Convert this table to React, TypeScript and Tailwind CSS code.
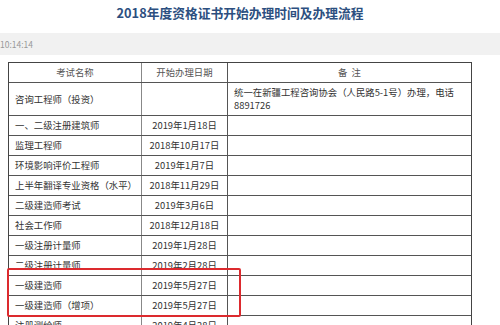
import React from 'react'

const FONT = { fontFamily: '"Noto Sans CJK SC", "Noto Sans", sans-serif' }

const ROWS: [string, string][] = [
  ['一、二级注册建筑师', '2019年1月18日'],
  ['监理工程师', '2018年10月17日'],
  ['环境影响评价工程师', '2019年1月7日'],
  ['上半年翻译专业资格（水平）', '2018年11月29日'],
  ['二级建造师考试', '2019年3月6日'],
  ['社会工作师', '2018年12月18日'],
  ['一级注册计量师', '2019年1月28日'],
  ['二级注册计量师', '2019年2月28日'],
  ['一级建造师', '2019年5月27日'],
  ['一级建造师（增项）', '2019年5月27日'],
  ['注册测绘师', '2019年4月28日'],
]

function Row({ name, date }: { name: string; date: string }) {
  return (
    <div className="flex h-[20px] border-b border-[#555]">
      <div className="w-[133px] shrink-0 border-r border-[#888] pl-[6px] flex items-center">{name}</div>
      <div className="w-[86px] shrink-0 border-r border-[#555] flex items-center justify-center">{date}</div>
      <div className="flex-1" />
    </div>
  )
}

export default function App() {
  return (
    <div className="relative w-[500px] h-[325px] overflow-hidden bg-white" style={FONT}>
      <div className="h-[33px] flex items-start justify-center pt-[4px] pr-[20px]">
        <h1 className="text-[12.75px] font-bold text-[#2c4f80] leading-[18px]">
          2018年度资格证书开始办理时间及办理流程
        </h1>
      </div>
      <div className="h-[22px] bg-[#f1f1f1] flex items-center text-[8.5px] text-[#999]">10:14:14</div>
      <div className="ml-[8px] mt-[7px] w-[464px] border border-[#444] border-b-0 text-[9.4px] text-[#333] leading-[13px]">
        <div className="flex h-[20px] border-b border-[#555] text-[#555]">
          <div className="w-[133px] shrink-0 border-r border-[#888] flex items-center justify-center">考试名称</div>
          <div className="w-[86px] shrink-0 border-r border-[#555] flex items-center justify-center">开始办理日期</div>
          <div className="flex-1 flex items-center justify-center">备&nbsp;&nbsp;注</div>
        </div>
        <div className="flex h-[33px] border-b border-[#555]">
          <div className="w-[133px] shrink-0 border-r border-[#888] pl-[6px] flex items-center">咨询工程师（投资）</div>
          <div className="w-[86px] shrink-0 border-r border-[#555]" />
          <div className="flex-1 pl-[6px] pr-[6px] flex flex-col justify-center">
            <span>统一在新疆工程咨询协会（人民路5-1号）办理，电话</span>
            <span>8891726</span>
          </div>
        </div>
        {ROWS.map(([name, date]) => (
          <Row key={name} name={name} date={date} />
        ))}
      </div>
      <div className="absolute left-[7px] top-[268px] w-[234px] h-[49px] border-2 border-[#dc2a2e] rounded-[2px]" />
    </div>
  )
}
